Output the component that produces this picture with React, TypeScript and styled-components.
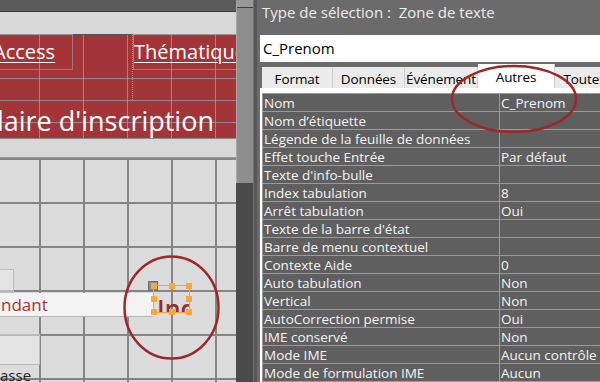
import styled, { createGlobalStyle } from "styled-components";

interface Property {
  name: string;
  value: string;
}

const properties: Property[] = [
  { name: "Nom", value: "C_Prenom" },
  { name: "Nom d’étiquette", value: "" },
  { name: "Légende de la feuille de données", value: "" },
  { name: "Effet touche Entrée", value: "Par défaut" },
  { name: "Texte d'info-bulle", value: "" },
  { name: "Index tabulation", value: "8" },
  { name: "Arrêt tabulation", value: "Oui" },
  { name: "Texte de la barre d'état", value: "" },
  { name: "Barre de menu contextuel", value: "" },
  { name: "Contexte Aide", value: "0" },
  { name: "Auto tabulation", value: "Non" },
  { name: "Vertical", value: "Non" },
  { name: "AutoCorrection permise", value: "Oui" },
  { name: "IME conservé", value: "Non" },
  { name: "Mode IME", value: "Aucun contrôle" },
  { name: "Mode de formulation IME", value: "Aucun" }
];

const tabs = [
  { label: "Format", width: 71 },
  { label: "Données", width: 72 },
  { label: "Événement", width: 73 },
  { label: "Autres", width: 77, active: true },
  { label: "Toutes", width: 60 }
];

// handle offsets on the selected control (x, y in %)
const handles = [
  [0, 0], [50, 0], [100, 0],
  [0, 50], [100, 50],
  [0, 100], [50, 100], [100, 100]
];

const App = () => {
  return (
    <>
      <GlobalStyle />
      <Screen>
        <DesignView>
          <TopStrip />
          <SectionBar $h={22} />
          <HeaderSection>
            <HeaderLabel $left={-45} $width={118} $pad={37}>
              <LinkText>Access</LinkText>
            </HeaderLabel>
            <EmptyBox />
            <HeaderLabel $left={133} $width={140} $pad={0}>
              <LinkText>Thématique</LinkText>
            </HeaderLabel>
            <TitleBox>
              <Title>Formulaire d'inscription</Title>
            </TitleBox>
          </HeaderSection>
          <SectionBar $h={18} $top />
          <DetailSection>
            <OutlineBox $left={-40} $top={111} $width={54} $height={24} />
            <TextField>ndant</TextField>
            <MoveHandle />
            <SelectedControl>
              <FieldText>Ind</FieldText>
              {handles.map(([x, y], i) => (
                <Handle key={i} style={{ left: `${x}%`, top: `${y}%` }} />
              ))}
            </SelectedControl>
            <OutlineBox $left={-40} $top={176} $width={80} $height={31} />
            <SmallLabel>asse</SmallLabel>
          </DetailSection>
        </DesignView>
        <ScrollBar>
          <Thumb />
        </ScrollBar>
        <Splitter />
        <PropertyPane>
          <PaneTitle>Type de sélection :&nbsp; Zone de texte</PaneTitle>
          <ObjectSelect>C_Prenom</ObjectSelect>
          <TabRow>
            {tabs.map((t) => (
              <Tab key={t.label} $active={!!t.active} $width={t.width}>
                {t.label}
              </Tab>
            ))}
          </TabRow>
          <TabBody>
            <PropGrid>
              {properties.map((p) => (
                <PropRow key={p.name}>
                  <PropName>{p.name}</PropName>
                  <PropValue>{p.value}</PropValue>
                </PropRow>
              ))}
            </PropGrid>
          </TabBody>
        </PropertyPane>
        <Annotations width="600" height="382" viewBox="0 0 600 382">
          <ellipse cx="171.5" cy="307.5" rx="47" ry="51" />
          <ellipse cx="514" cy="99" rx="62" ry="33" />
        </Annotations>
      </Screen>
    </>
  );
};

export default App;

const GlobalStyle = createGlobalStyle`
  html, body {
    margin: 0;
    padding: 0;
    background: #6b6b6b;
  }
  body {
    font-family: "Open Sans", "Noto Sans", sans-serif;
  }
`;

const Screen = styled.div`
  position: relative;
  display: flex;
  width: 600px;
  height: 382px;
  overflow: hidden;
`;

const DesignView = styled.div`
  width: 236px;
  flex-shrink: 0;
  display: flex;
  flex-direction: column;
  background: #dcdcdc;
  overflow: hidden;
`;
const TopStrip = styled.div`
  height: 11px;
  background: #5a5a5a;
  border-bottom: 1px solid #3e3e3e;
`;
const SectionBar = styled.div<{ $h: number; $top?: boolean }>`
  height: ${(p) => p.$h}px;
  flex-shrink: 0;
  background: #d8d8d8;
  border-top: ${(p) => (p.$top ? "1px solid #8a8a8a" : "none")};
  border-bottom: 1px solid #9a9a9a;
`;
const HeaderSection = styled.div`
  position: relative;
  height: 103px;
  flex-shrink: 0;
  background-color: #a33538;
  background-image:
    linear-gradient(to right, transparent 39px, rgba(150, 160, 175, 0.75) 39px, rgba(150, 160, 175, 0.75) 40px, transparent 40px),
    linear-gradient(to bottom, transparent 43px, rgba(150, 160, 175, 0.75) 43px, rgba(150, 160, 175, 0.75) 44px, transparent 44px);
  background-size: 44px 44px;
`;
const HeaderLabel = styled.div<{ $left: number; $width: number; $pad: number }>`
  position: absolute;
  top: -1px;
  left: ${(p) => p.$left}px;
  width: ${(p) => p.$width}px;
  height: 36px;
  box-sizing: border-box;
  border: 1px solid rgba(160, 150, 160, 0.7);
  padding-left: ${(p) => p.$pad}px;
  white-space: nowrap;
`;
const LinkText = styled.span`
  display: block;
  margin-top: 4px;
  color: #ffffff;
  font-size: 20px;
  line-height: 26px;
  text-decoration: underline;
  text-decoration-thickness: 1px;
  text-underline-offset: 3px;
`;
const EmptyBox = styled.div`
  position: absolute;
  top: -1px;
  left: 73px;
  width: 60px;
  height: 66px;
  box-sizing: border-box;
  border-top: 1px solid #555;
  border-right: 1px dotted rgba(150, 160, 175, 0.9);
`;
const TitleBox = styled.div`
  position: absolute;
  top: 65px;
  left: -120px;
  right: -10px;
  height: 40px;
  border-top: 1px solid rgba(150, 160, 175, 0.75);
`;
const Title = styled.div`
  position: absolute;
  right: 32px;
  top: 1px;
  color: #ffffff;
  font-size: 27px;
  line-height: 38px;
  white-space: nowrap;
`;

const DetailSection = styled.div`
  position: relative;
  flex: 1;
  background-color: #dcdcdc;
  background-image:
    linear-gradient(to right, transparent 39px, #858585 39px, #858585 41px, transparent 41px),
    linear-gradient(to bottom, #858585 0, #858585 2px, transparent 2px);
  background-size: 44px 44px;
`;
const OutlineBox = styled.div<{ $left: number; $top: number; $width: number; $height: number }>`
  position: absolute;
  left: ${(p) => p.$left}px;
  top: ${(p) => p.$top}px;
  width: ${(p) => p.$width}px;
  height: ${(p) => p.$height}px;
  box-sizing: border-box;
  border: 1px solid #bdbdbd;
  background: rgba(235, 235, 235, 0.5);
`;
const TextField = styled.div`
  position: absolute;
  left: -10px;
  top: 135px;
  width: 163px;
  height: 24px;
  box-sizing: border-box;
  padding-left: 11px;
  background: #f3f3f3;
  border-bottom: 1px solid #b5b5b5;
  color: #a33538;
  font-size: 17px;
  line-height: 24px;
`;
const MoveHandle = styled.div`
  position: absolute;
  left: 148px;
  top: 123px;
  width: 10px;
  height: 10px;
  box-sizing: border-box;
  background: #8c8c8c;
  border: 1px solid #6e6e6e;
`;
const SelectedControl = styled.div`
  position: absolute;
  left: 153px;
  top: 127px;
  width: 37px;
  height: 28px;
  box-sizing: border-box;
  border: 1px solid #f5a431;
`;
const FieldText = styled.div`
  width: 100%;
  height: 100%;
  overflow: hidden;
  padding-left: 3px;
  box-sizing: border-box;
  color: #9b2c2f;
  font-size: 25px;
  font-weight: 600;
  line-height: 44px;
  white-space: nowrap;
`;
const Handle = styled.span`
  position: absolute;
  width: 6px;
  height: 6px;
  margin: -3px 0 0 -3px;
  background: #f7a83a;
`;
const SmallLabel = styled.div`
  position: absolute;
  left: -40px;
  top: 207px;
  width: 80px;
  height: 20px;
  padding-left: 40px;
  box-sizing: border-box;
  color: #222;
  font-size: 15px;
  line-height: 20px;
`;

const ScrollBar = styled.div`
  width: 17px;
  flex-shrink: 0;
  background: #4b4b4b;
`;
const Thumb = styled.div`
  height: 183px;
  box-sizing: border-box;
  background: #8e8e8e;
  border-left: 1px solid #a8a8a8;
  border-top: 7px solid #999;
  box-shadow: inset 0 1px 0 #3f3f3f;
`;
const Splitter = styled.div`
  width: 4px;
  flex-shrink: 0;
  box-sizing: border-box;
  background: #575757;
  border-left: 1px solid #707070;
`;

const PropertyPane = styled.div`
  flex: 1;
  min-width: 0;
  display: flex;
  flex-direction: column;
  padding-left: 3px;
  background: #6b6b6b;
`;
const PaneTitle = styled.div`
  height: 36px;
  padding-left: 2px;
  color: #ececec;
  font-size: 15px;
  line-height: 24px;
  white-space: nowrap;
`;
const ObjectSelect = styled.div`
  height: 27px;
  padding-left: 3px;
  background: #ffffff;
  color: #000;
  font-size: 15px;
  line-height: 27px;
`;
const TabRow = styled.div`
  display: flex;
  align-items: flex-end;
  height: 25px;
  margin-top: 2px;
  padding-left: 2px;
  overflow: hidden;
`;
const Tab = styled.div<{ $active: boolean; $width: number }>`
  flex-shrink: 0;
  width: ${(p) => p.$width}px;
  height: ${(p) => (p.$active ? 25 : 21)}px;
  box-sizing: border-box;
  background: ${(p) => (p.$active ? "#ffffff" : "#ebebeb")};
  border-right: 1px solid #cfcfcf;
  color: #000;
  font-size: 13.5px;
  letter-spacing: -0.1px;
  line-height: ${(p) => (p.$active ? 28 : 25)}px;
  text-align: center;
  white-space: nowrap;
  overflow: hidden;
`;
const TabBody = styled.div`
  flex: 1;
  background: #ffffff;
  padding: 5px 0 0 2px;
`;
const PropGrid = styled.div`
  background: #5f5f5f;
  border-top: 1px solid #9a9a9a;
  border-left: 1px solid #9a9a9a;
`;
const PropRow = styled.div`
  display: grid;
  grid-template-columns: 237px 1fr;
  height: 18px;
  box-sizing: border-box;
  border-bottom: 1px solid #9a9a9a;
  color: #f4f4f4;
  font-size: 13.5px;
  line-height: 18px;
  white-space: nowrap;
`;
const PropName = styled.div`
  padding-left: 1px;
  border-right: 1px solid #9a9a9a;
  overflow: hidden;
`;
const PropValue = styled.div`
  padding-left: 1px;
  overflow: hidden;
`;

const Annotations = styled.svg`
  position: absolute;
  top: 0;
  left: 0;
  pointer-events: none;
  fill: none;
  stroke: #9e2829;
  stroke-width: 2.5;
`;
